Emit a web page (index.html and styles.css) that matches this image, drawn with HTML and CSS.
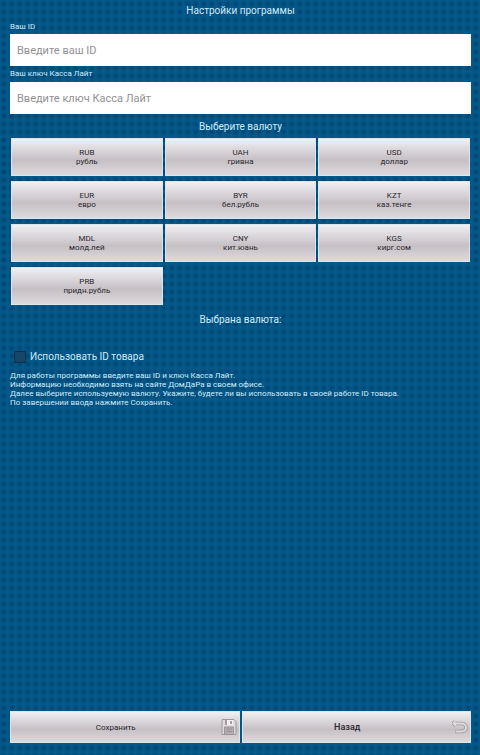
FILE: index.html
```html
<!DOCTYPE html>
<html lang="ru">
<head>
<meta charset="utf-8">
<meta name="viewport" content="width=device-width, initial-scale=1">
<title>Настройки программы</title>
<link rel="stylesheet" href="styles.css">
</head>
<body>
<form class="page">
  <h1 class="title">Настройки программы</h1>
  <label class="field-label" for="user-id">Ваш ID</label>
  <input class="field" id="user-id" type="text" placeholder="Введите ваш ID">
  <label class="field-label" for="user-key">Ваш ключ Касса Лайт</label>
  <input class="field" id="user-key" type="text" placeholder="Введите ключ Касса Лайт">
  <h2 class="title section-title">Выберите валюту</h2>
  <div class="currencies">
    <button class="btn" type="button">RUB<br>рубль</button>
    <button class="btn" type="button">UAH<br>гривна</button>
    <button class="btn" type="button">USD<br>доллар</button>
    <button class="btn" type="button">EUR<br>евро</button>
    <button class="btn" type="button">BYR<br>бел.рубль</button>
    <button class="btn" type="button">KZT<br>каз.тенге</button>
    <button class="btn" type="button">MDL<br>молд.лей</button>
    <button class="btn" type="button">CNY<br>кит.юань</button>
    <button class="btn" type="button">KGS<br>кирг.сом</button>
    <button class="btn" type="button">PRB<br>придн.рубль</button>
  </div>
  <p class="title selected">Выбрана валюта:</p>
  <div class="option">
    <input class="check" id="use-id" type="checkbox">
    <label for="use-id">Использовать ID товара</label>
  </div>
  <p class="help">Для работы программы введите ваш ID и ключ Касса Лайт.<br>
  Информацию необходимо взять на сайте ДомДаРа в своем офисе.<br>
  Далее выберите используемую валюту. Укажите, будете ли вы использовать в своей работе ID товара.<br>
  По завершении ввода нажмите Сохранить.</p>
  <div class="actions">
    <button class="btn action" type="submit"><span class="action-text">Сохранить</span>
      <svg class="icon" viewBox="0 0 16 16" aria-hidden="true">
        <path d="M1 .5h12l2 2v13H1z" fill="#dedade" stroke="#9d979b"/>
        <path d="M4 1h8v5H4z" fill="#f4f2f4"/>
        <path d="M4 1h2v5H4zM9 2h2v3H9z" fill="#a29ca0"/>
        <path d="M3.500 8h9v7.500h-9z" fill="#b5afb3" stroke="#9a9498"/>
        <path d="M5 10h6M5 12.500h6" stroke="#938d91"/>
      </svg>
    </button>
    <button class="btn action action-back" type="button"><span class="action-text">Назад</span>
      <svg class="icon" viewBox="0 0 16 16" aria-hidden="true">
        <path d="M3 2.500L1.500 4.500L4 7M2.500 4.500H10a4 4 0 0 1 0 8H3" fill="none" stroke="#9a9498" stroke-width="3.500" stroke-linejoin="round"/>
        <path d="M3 2.500L1.500 4.500L4 7M2.500 4.500H10a4 4 0 0 1 0 8H3.500" fill="none" stroke="#dfdbdf" stroke-width="2"/>
      </svg>
    </button>
  </div>
</form>
</body>
</html>
```
FILE: styles.css
```css
* {
  box-sizing: border-box;
}

body {
  margin: 0;
  font-family: Roboto, "Liberation Sans", sans-serif;
  color: #d0eaf8;
  background-color: #03588a;
  background-image:
    radial-gradient(circle, #01426f 0, #02487699 2px, transparent 4px),
    linear-gradient(90deg, transparent 5px, #0a5e8c55 5px);
  background-size: 8px 8px;
}

.page {
  display: flex;
  flex-direction: column;
  min-height: 100vh;
  padding: 3px 9px 12px 10px;
}

.title {
  margin: 0;
  font-size: 10px;
  font-weight: 400;
  line-height: 16px;
  text-align: center;
}

.field-label {
  font-size: 8px;
  line-height: 15px;
}

.field {
  width: 100%;
  height: 32px;
  padding: 0 7px;
  border: 0;
  border-radius: 0;
  background: #fff;
  color: #333;
  font: 11px Roboto, "Liberation Sans", sans-serif;
}

.field + .field-label {
  line-height: 16px;
}

.field::placeholder {
  color: #929292;
  opacity: 1;
}

.section-title {
  margin-top: 5px;
}

.currencies {
  display: grid;
  grid-template-columns: repeat(3, 1fr);
  gap: 5px 2px;
  margin: 3px 1px 0;
}

.btn {
  height: 38px;
  padding: 0;
  border: 1px solid #dce6ed;
  border-radius: 0;
  background: linear-gradient(#f0f0f3 0, #dedbdf 25%, #c6c0c5 58%, #cfcace 75%, #dcdadd 100%);
  color: #29272b;
  font: 8px/9px Roboto, "Liberation Sans", sans-serif;
}

.selected {
  margin-top: 7px;
}

.option {
  display: flex;
  align-items: center;
  gap: 4px;
  margin-top: 21px;
  padding-left: 4px;
  font-size: 10px;
  line-height: 16px;
}

.check {
  appearance: none;
  width: 12px;
  height: 12px;
  margin: 0;
  border: 1px solid #0a304b;
  border-radius: 1px;
  background: #15476b;
}

.check:checked {
  background: #8fd0f0;
}

.help {
  margin: 6px 0 0;
  font-size: 8px;
  line-height: 9px;
}

.actions {
  display: grid;
  grid-template-columns: 1fr 1fr;
  gap: 2px;
  margin-top: auto;
}

.action {
  display: flex;
  align-items: center;
  height: 32px;
  padding-right: 2px;
}

.action-text {
  flex: 1;
}

.action-back {
  font-size: 9px;
  font-weight: 500;
}

.icon {
  width: 16px;
  height: 16px;
}
```
